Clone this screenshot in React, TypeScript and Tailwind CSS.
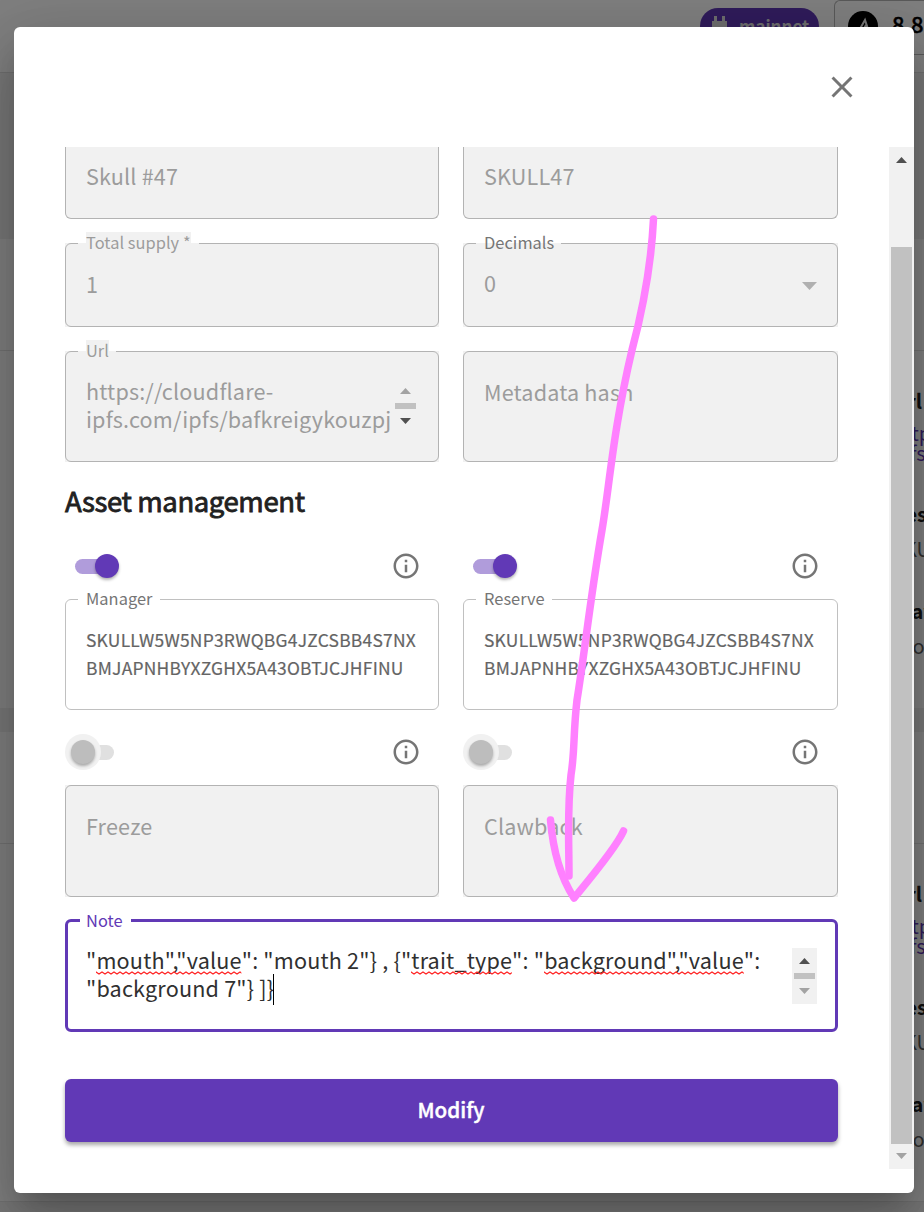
import React from 'react';

const PAGE = 'font-["Noto_Sans_CJK_SC","Noto_Sans",sans-serif]';

function Field({ label, legend, className, dim, focused, pos, children }: {
  label?: string; legend?: string; className: string; dim?: boolean; focused?: boolean; pos?: string; children: React.ReactNode;
}) {
  return (
    <div className={`relative ${dim ? 'bg-[#f1f1f1]' : 'bg-white'} ${className}`}>
      {children}
      <fieldset className={`pointer-events-none absolute inset-x-0 -top-2 bottom-0 rounded-[6px] pl-3 ${focused ? 'border-[3px] border-[#6139b6]' : dim ? 'border border-[#b3b3b3]' : 'border border-[#c0c0c0]'}`}>
        <legend className={`h-4 ${legend ?? 'w-0'}`} />
      </fieldset>
      {label && (
        <span className={`absolute left-[21px] h-5 text-[16.4px] leading-[20px] tracking-[0.04px] whitespace-nowrap ${focused ? '-top-[10px]' : '-top-[11px]'} ${pos ?? ''}`}>{label}</span>
      )}
    </div>
  );
}

function Tri({ up, className }: { up?: boolean; className: string }) {
  return (
    <svg width="11" height="6" viewBox="0 0 11 6" className={className} fill="currentColor">
      <path d={up ? 'M5.5 0L11 6H0Z' : 'M0 0H11L5.5 6Z'} />
    </svg>
  );
}

function Info() {
  return (
    <svg width="30" height="30" viewBox="0 0 24 24" fill="#757575">
      <path d="M11 7h2v2h-2zm0 4h2v6h-2zm1-9C6.48 2 2 6.48 2 12s4.48 10 10 10 10-4.48 10-10S17.52 2 12 2zm0 18c-4.41 0-8-3.59-8-8s3.59-8 8-8 8 3.59 8 8-3.59 8-8 8z" />
    </svg>
  );
}

function SwitchRow({ on }: { on?: boolean }) {
  return (
    <div className="flex h-[36px] items-center justify-between pr-[18px]">
      {on ? (
        <div className="flex h-6 items-center pl-[10px]">
          <div className="h-[15px] w-[39px] rounded-full bg-[#b09cdb]" />
          <div className="-ml-[19px] size-6 rounded-full bg-[#6139b6] shadow-[0_2px_3px_rgba(0,0,0,0.3)]" />
        </div>
      ) : (
        <div className="flex items-center">
          <div className="z-10 flex size-9 items-center justify-center rounded-full bg-[#f1f1f1]">
            <div className="size-6 rounded-full bg-[#bdbdbd] shadow-[0_2px_3px_rgba(0,0,0,0.3)]" />
          </div>
          <div className="-ml-[10px] h-[15px] w-[23px] rounded-full bg-[#e0e0e0]" />
        </div>
      )}
      <Info />
    </div>
  );
}

function Value({ children }: { children: React.ReactNode }) {
  return <div className="pt-[26px] pl-[21px] text-[21.6px] leading-[30px] tracking-[0.16px] text-[#9c9c9c]">{children}</div>;
}

const ADDRESS = ['SKULLW5W5NP3RWQBG4JZCSBB4S7NX', 'BMJAPNHBYXZGHX5A43OBTJCJHFINU'];

function Address() {
  return (
    <div className="px-[21px] pt-[27px] text-[17.4px] leading-[28px] tracking-[0.26px] whitespace-nowrap text-[#646464] [-webkit-text-stroke:0.2px_#646464]">
      {ADDRESS.map((l) => <div key={l}>{l}</div>)}
    </div>
  );
}

function Squiggle({ children }: { children: React.ReactNode }) {
  return (
    <span className="relative">
      {children}
      <svg className="absolute top-[27px] left-0 h-[4px] w-full">
        <defs>
          <pattern id="wave" width="6" height="4" patternUnits="userSpaceOnUse">
            <path d="M-1.500 2.500L0 1L3 3L6 1L7.500 2.500" fill="none" stroke="#f22" strokeWidth="1.2" />
          </pattern>
        </defs>
        <rect width="100%" height="4" fill="url(#wave)" />
      </svg>
    </span>
  );
}

function Card() {
  const title = 'text-[20px] leading-6 font-bold text-[#202020]';
  const body = 'text-[20px] leading-5 text-[#606060]';
  return (
    <div className="h-[469px] shrink-0 bg-white">
      <div className="h-[112px] border-b border-[#e4e4e4]" />
      <div className="pt-[38px] pl-[892px] whitespace-nowrap">
        <div className={title}>Url</div>
        <div className="pt-[10px] text-[20px] leading-5 text-[#6139b6]">
          <div>http</div>
          <div>ipfs</div>
        </div>
        <div className={`mt-[39px] ${title}`}>Res</div>
        <div className={`mt-[13px] ${body}`}>SKU</div>
        <div className={`mt-[40px] ${title}`}>Claw</div>
        <div className={`mt-[13px] pl-[6px] ${body}`}>No</div>
      </div>
    </div>
  );
}

function Background() {
  return (
    <div className="flex h-full flex-col gap-6 bg-[#f0f0f0]">
      <div className="-mb-6 flex h-[73px] shrink-0 items-start justify-end border-b border-[#dedede] bg-white">
        <div className="mt-2 mr-[15px] flex h-[36px] w-[119px] items-center rounded-full bg-[#6139b6] pl-3 text-white">
          <svg width="15" height="22" viewBox="0 0 15 22" fill="#dcdcdc"><path d="M2 1h3v5h5V1h3v5h2v8l-4 4v4H4v-4l-4-4V6h2z" /></svg>
          <span className="ml-3 text-[17px] leading-5 font-bold text-[#dcdcdc]">mainnet</span>
        </div>
        <div className="flex h-[55px] w-[90px] shrink-0 rounded-l-[6px] border border-r-0 border-[#b5b5b5] pl-[13px]">
          <div className="mt-[10px] flex size-[30px] shrink-0 items-center justify-center rounded-full bg-black">
            <svg width="14" height="18" viewBox="0 0 14 18" fill="none" stroke="#eee" strokeWidth="2"><path d="M1 17L9 3L11 9L13 17M5 17L10 8" /></svg>
          </div>
          <span className="ml-[14px] pt-[7px] text-[22px] leading-[30px] font-medium whitespace-nowrap text-black [-webkit-text-stroke:0.4px_#000]">8.8</span>
        </div>
      </div>
      <div className="h-[142px] shrink-0" />
      <Card />
      <Card />
      <div className="-mt-6 border-t border-[#e4e4e4]" />
    </div>
  );
}

export default function App() {
  return (
    <div className={`relative h-[1212px] w-[924px] overflow-hidden ${PAGE}`}>
      <Background />
      <div className="absolute inset-0 bg-black/50 pt-[27px] pl-[14px]">
        <div className="flex h-[1166px] w-[900px] flex-col rounded-[6px] bg-white shadow-[0_16px_22px_-10px_rgba(0,0,0,0.2),0_36px_57px_4px_rgba(0,0,0,0.14),0_14px_69px_12px_rgba(0,0,0,0.12)]">
          <div className="flex h-[120px] justify-end pt-[42px] pr-[54px]">
            <svg width="36" height="36" viewBox="0 0 24 24" fill="#757575"><path d="M19 6.41L17.59 5 12 10.59 6.41 5 5 6.41 10.59 12 5 17.59 6.41 19 12 13.41 17.59 19 19 17.59 13.41 12z" /></svg>
          </div>
          <div className="flex h-[1022px]">
            <div className="flex w-[875px] flex-col pl-[51px]">
              <div className="grid w-[773px] grid-cols-[374px_375px] gap-x-6">
                <div className="h-[72px] rounded-b-[6px] border border-t-0 border-[#b3b3b3] bg-[#f1f1f1] pt-[14px] pl-5 text-[21.6px] leading-[30px] tracking-[0.16px] text-[#9c9c9c]">Skull #47</div>
                <div className="h-[72px] rounded-b-[6px] border border-t-0 border-[#b3b3b3] bg-[#f1f1f1] pt-[14px] pl-5 text-[21.6px] leading-[30px] tracking-[0.16px] text-[#9c9c9c]">SKULL47</div>
                <Field dim label="Total supply *" legend="w-[121px]" pos="bg-[#f1f1f1] text-[#9c9c9c]" className="mt-6 h-[84px]">
                  <Value>1</Value>
                </Field>
                <Field dim label="Decimals" legend="w-[85px]" pos="text-[#757575]" className="mt-6 h-[84px]">
                  <div className="flex items-center justify-between pt-[25px] pr-[21.500px] pl-[21px] text-[21.6px] leading-[30px] text-[#9c9c9c]">
                    0
                    <svg className="mt-[5px]" width="15" height="8" viewBox="0 0 15 8" fill="#b0b0b0"><path d="M0 0H15L7.5 8Z" /></svg>
                  </div>
                </Field>
                <Field dim label="Url" legend="w-[38px]" pos="bg-[#f1f1f1] text-[#9c9c9c]" className="mt-6 h-[111px]">
                  <div className="flex pt-[26px] pl-[21px]">
                    <div className="w-[309px] text-[21.6px] leading-[28px] tracking-[0.16px] whitespace-nowrap text-[#9c9c9c]">
                      <div>https://cloudflare-</div>
                      <div>ipfs.com/ipfs/bafkreigykouzpj</div>
                    </div>
                    <div className="flex w-[21px] flex-col items-center pt-[11px]">
                      <Tri up className="text-[#a3a3a3]" />
                      <div className="mt-[9px] h-[6px] w-[21px] bg-[#c1c1c1]" />
                      <Tri className="mt-[9px] text-[#505050]" />
                    </div>
                  </div>
                </Field>
                <Field dim className="mt-6 h-[111px]"><Value>Metadata hash</Value></Field>
              </div>
              <h2 className="mt-5 h-[38px] text-[27.500px] leading-[36px] font-normal tracking-[-0.4px] whitespace-nowrap text-[#212121] [-webkit-text-stroke:0.8px_#212121]">Asset management</h2>
              <div className="mt-[28px] grid w-[773px] grid-cols-[374px_375px] gap-x-6">
                <SwitchRow on />
                <SwitchRow on />
                <Field label="Manager" legend="w-[82px]" pos="text-[#757575]" className="mt-[15px] h-[111px]"><Address /></Field>
                <Field label="Reserve" legend="w-[76px]" pos="text-[#757575]" className="mt-[15px] h-[111px]"><Address /></Field>
                <div className="mt-6"><SwitchRow /></div>
                <div className="mt-6"><SwitchRow /></div>
                <Field dim className="mt-[15px] h-[112px]"><Value>Freeze</Value></Field>
                <Field dim className="mt-[15px] h-[112px]"><Value>Clawback</Value></Field>
              </div>
              <Field focused label="Note" legend="w-[51px]" pos="text-[#6139b6]" className="mt-[23px] h-[112px] w-[773px]">
                <div className="flex justify-between pt-[26px] pr-[21px] pl-[21px]">
                  <div className="text-[21.6px] leading-[28px] tracking-[0.18px] whitespace-nowrap text-[#303030]">
                    <div>"<Squiggle>mouth","value</Squiggle>": "mouth 2"{'}'} , {'{'}"<Squiggle>trait_type</Squiggle>": "<Squiggle>background","value</Squiggle>":</div>
                    <div className="flex">"background 7"{'}'} ]{'}'}<span className="-ml-px h-[31px] w-px bg-black" /></div>
                  </div>
                  <div className="mt-[2px] flex h-14 w-[25px] flex-col items-center bg-[#f1f1f1] pt-[10px]">
                    <Tri up className="text-[#505050]" />
                    <div className="mt-[9px] h-[6px] w-[21px] bg-[#c1c1c1]" />
                    <Tri className="mt-[9px] text-[#a3a3a3]" />
                  </div>
                </div>
              </Field>
              <button className="mt-[47px] h-[63px] w-[773px] rounded-[6px] bg-[#6139b6] pr-px pb-[3px] text-[20.600px] font-medium text-white shadow-[0_3px_4px_rgba(0,0,0,0.35)] [-webkit-text-stroke:0.4px_#fff]">Modify</button>
            </div>
            <div className="flex w-[25px] flex-col items-center bg-[#f1f1f1]">
              <Tri up className="mt-[10px] text-[#505050]" />
              <div className="mt-[84px] h-[897px] w-[21px] bg-[#c1c1c1]" />
              <Tri className="mt-[9px] text-[#a3a3a3]" />
            </div>
          </div>
        </div>
      </div>
      <svg className="pointer-events-none absolute inset-0" width="924" height="1212" fill="none" stroke="#ff80ff" strokeWidth="7.5" strokeLinecap="round" strokeLinejoin="round">
        <path d="M653.500 219C651 270 640 320 632 350C613 430 609 490 602 530C590 600 585 650 577 700C573 735 575 750 571 775C567 810 569 840 569 876" />
        <path d="M550.500 820C553 850 561 878 574 898C588 881 616 848 623.500 831" />
      </svg>
    </div>
  );
}
